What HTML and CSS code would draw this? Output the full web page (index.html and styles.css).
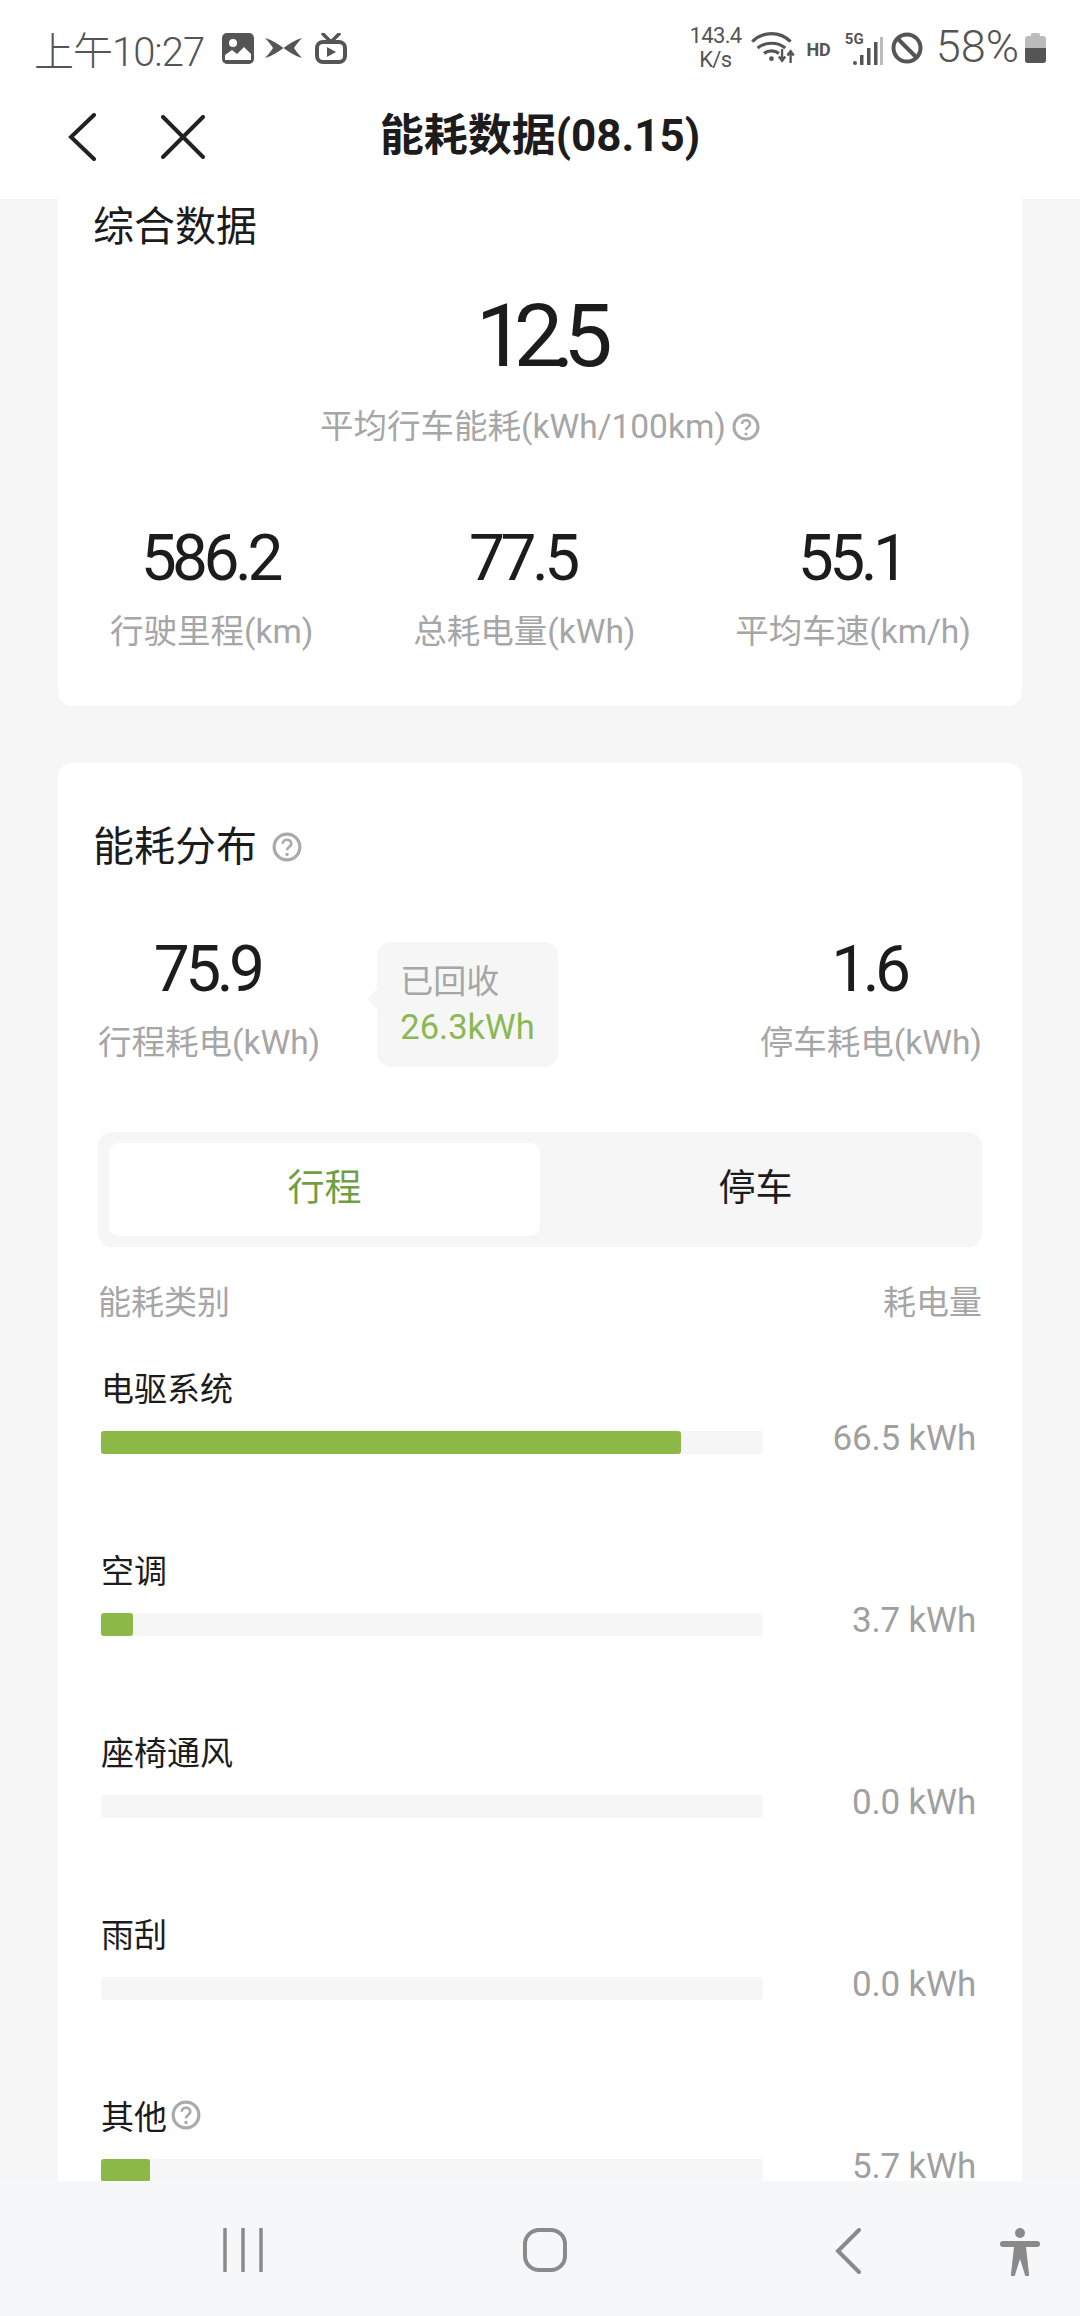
FILE: index.html
```html
<!DOCTYPE html>
<html lang="zh-CN">

<head>
    <meta charset="UTF-8">
    <title>能耗数据</title>
    <link rel="stylesheet" href="styles.css">
</head>

<body>
    <div class="statusbar">
        <div class="status-left">
            <span class="clock">上午10:27</span>
            <svg class="ic-photo" width="32" height="31" viewBox="0 0 32 31">
                <rect width="32" height="31" rx="5" fill="#555"/>
                <circle cx="11" cy="10" r="4" fill="#fff"/>
                <path d="M3 27v-5l7-5 5 4 7-7 7 7v6z" fill="#fff"/>
            </svg>
            <svg class="ic-logo" width="37" height="22" viewBox="0 0 37 22">
                <path d="M0 1c7 2 13 6 18.500 10C24 7 30 3 37 1c-3 3-6 7-8 10 2 3 5 7 8 10-7-2-13-6-18.500-10C13 15 7 19 0 21c3-3 6-7 8-10-2-3-5-7-8-10z" fill="#555"/>
            </svg>
            <svg class="ic-tv" width="32" height="31" viewBox="0 0 32 31">
                <path d="M8 1l7 7M24 1l-7 7" stroke="#555" stroke-width="3.500" stroke-linecap="round"/>
                <rect x="2" y="9" width="28" height="20" rx="6" fill="none" stroke="#555" stroke-width="4"/>
                <path d="M12 14l9 5-9 5z" fill="#555"/>
            </svg>
        </div>
        <div class="status-right">
            <div class="netspeed">143.4<br>K/s</div>
            <svg class="ic-wifi" width="45" height="33" viewBox="0 0 42 31">
                <path d="M2 10c10-10 26-10 36 0M7 16c7-6 19-6 26 0M13 21c4-3 10-3 14 0" fill="none" stroke="#555" stroke-width="3"/>
                <circle cx="20" cy="26" r="2.200" fill="#555"/>
                <path d="M30 17v11M27 24l3 4 3-4M38 30V19M35 23l3-4 3 4" fill="none" stroke="#555" stroke-width="2.200"/>
            </svg>
            <span class="hd">HD</span>
            <div class="signal">
                <span class="five-g">5G</span>
                <svg width="30" height="28" viewBox="0 0 30 28">
                    <circle cx="2" cy="26" r="2" fill="#555"/>
                    <rect x="7" y="18" width="3.500" height="10" fill="#555"/>
                    <rect x="14" y="11" width="3.500" height="17" fill="#555"/>
                    <rect x="21" y="5" width="3.500" height="23" fill="#555"/>
                    <rect x="27" y="0" width="3" height="28" fill="#bbb"/>
                </svg>
            </div>
            <svg class="ic-block" width="32" height="32" viewBox="0 0 32 32">
                <circle cx="16" cy="16" r="13.500" fill="none" stroke="#555" stroke-width="4"/>
                <path d="M6.500 6.500l19 19" stroke="#555" stroke-width="4"/>
            </svg>
            <span class="battery-text">58%</span>
            <div class="battery">
                <div class="battery-cap"></div>
                <div class="battery-body"><div class="battery-level"></div></div>
            </div>
        </div>
    </div>

    <div class="topnav">
        <svg class="nav-back" width="30" height="48" viewBox="0 0 30 48">
            <path d="M27 2L4 24l23 22" fill="none" stroke="#222" stroke-width="4" stroke-linecap="round"/>
        </svg>
        <svg class="nav-close" width="44" height="44" viewBox="0 0 44 44">
            <path d="M2 2l40 40M42 2L2 42" fill="none" stroke="#222" stroke-width="4" stroke-linecap="round"/>
        </svg>
        <h1 class="nav-title">能耗数据(08.15)</h1>
    </div>

    <div class="content">
        <div class="card card-summary">
            <div class="card-title">综合数据</div>
            <div class="big-num">12.5</div>
            <div class="caption"><span>平均行车能耗(kWh/100km)</span>
                <svg class="help" width="28" height="28" viewBox="0 0 28 28">
                    <circle cx="14" cy="14" r="12" fill="none" stroke="#aaa" stroke-width="3"/>
                    <path d="M10 11c0-5 8-5 8 0 0 3-4 3-4 6" fill="none" stroke="#aaa" stroke-width="2.500"/>
                    <circle cx="14" cy="21" r="1.600" fill="#aaa"/>
                </svg>
            </div>
            <div class="stats">
                <div class="stat"><div class="num">586.2</div><div class="label">行驶里程(km)</div></div>
                <div class="stat"><div class="num">77.5</div><div class="label">总耗电量(kWh)</div></div>
                <div class="stat"><div class="num">55.1</div><div class="label">平均车速(km/h)</div></div>
            </div>
        </div>

        <div class="card card-dist">
            <div class="card-title title-help"><span>能耗分布</span>
                <svg class="help" width="30" height="30" viewBox="0 0 28 28">
                    <circle cx="14" cy="14" r="12" fill="none" stroke="#aaa" stroke-width="3"/>
                    <path d="M10 11c0-5 8-5 8 0 0 3-4 3-4 6" fill="none" stroke="#aaa" stroke-width="2.500"/>
                    <circle cx="14" cy="21" r="1.600" fill="#aaa"/>
                </svg>
            </div>
            <div class="dist-row">
                <div class="stat"><div class="num">75.9</div><div class="label">行程耗电(kWh)</div></div>
                <div class="recover">
                    <div class="recover-label">已回收</div>
                    <div class="recover-value">26.3kWh</div>
                </div>
                <div class="stat stat-right"><div class="num">1.6</div><div class="label">停车耗电(kWh)</div></div>
            </div>

            <div class="tabs">
                <div class="tab active">行程</div>
                <div class="tab">停车</div>
            </div>

            <div class="list-head"><span>能耗类别</span><span>耗电量</span></div>

            <div class="item">
                <div class="item-name">电驱系统</div>
                <div class="item-line">
                    <div class="track"><div class="fill" style="width: 87.6%"></div></div>
                    <div class="item-value">66.5 kWh</div>
                </div>
            </div>
            <div class="item">
                <div class="item-name">空调</div>
                <div class="item-line">
                    <div class="track"><div class="fill" style="width: 4.9%"></div></div>
                    <div class="item-value">3.7 kWh</div>
                </div>
            </div>
            <div class="item">
                <div class="item-name">座椅通风</div>
                <div class="item-line">
                    <div class="track"></div>
                    <div class="item-value">0.0 kWh</div>
                </div>
            </div>
            <div class="item">
                <div class="item-name">雨刮</div>
                <div class="item-line">
                    <div class="track"></div>
                    <div class="item-value">0.0 kWh</div>
                </div>
            </div>
            <div class="item">
                <div class="item-name name-help"><span>其他</span>
                    <svg class="help" width="30" height="30" viewBox="0 0 28 28">
                        <circle cx="14" cy="14" r="12" fill="none" stroke="#aaa" stroke-width="3"/>
                        <path d="M10 11c0-5 8-5 8 0 0 3-4 3-4 6" fill="none" stroke="#aaa" stroke-width="2.500"/>
                        <circle cx="14" cy="21" r="1.600" fill="#aaa"/>
                    </svg>
                </div>
                <div class="item-line">
                    <div class="track"><div class="fill" style="width: 7.4%"></div></div>
                    <div class="item-value">5.7 kWh</div>
                </div>
            </div>
        </div>
    </div>

    <div class="sysnav">
        <svg class="sys-lines" width="40" height="44" viewBox="0 0 40 44">
            <path d="M2 1v42M20 1v42M38 1v42" stroke="#8a8a8a" stroke-width="3.500" stroke-linecap="round"/>
        </svg>
        <svg class="sys-home" width="44" height="44" viewBox="0 0 44 44">
            <rect x="2" y="2" width="40" height="40" rx="14" fill="none" stroke="#8a8a8a" stroke-width="4"/>
        </svg>
        <svg class="sys-back" width="26" height="46" viewBox="0 0 26 46">
            <path d="M24 2L3 23l21 21" fill="none" stroke="#8a8a8a" stroke-width="4" stroke-linecap="round"/>
        </svg>
        <svg class="sys-person" width="40" height="48" viewBox="0 0 40 48">
            <circle cx="20" cy="5" r="5" fill="#8a8a8a"/>
            <path d="M3 13h34a2.500 2.500 0 0 1 0 6H26l3 27a2 2 0 0 1-4 1l-5-16-5 16a2 2 0 0 1-4-1l3-27H3a2.500 2.500 0 0 1 0-6z" fill="#8a8a8a"/>
        </svg>
    </div>
</body>

</html>
```
FILE: styles.css
```css
body {
    margin: 0;
    width: 1080px;
    height: 2316px;
    display: flex;
    flex-direction: column;
    overflow: hidden;
    background-color: #f6f6f6;
    font-family: "Roboto", "Noto Sans CJK SC", sans-serif;
    color: #1c1c1c;
}

/* status bar */
.statusbar {
    height: 68px;
    flex: none;
    background-color: #fff;
    display: flex;
    justify-content: space-between;
    color: #555;
}

.status-left {
    display: flex;
    align-items: flex-start;
    padding-left: 34px;
}

.clock {
    font-size: 40px;
    line-height: 44px;
    margin-top: 31px;
    letter-spacing: -1px;
    font-weight: 300;
}

.ic-photo {
    margin: 33px 0 0 18px;
}

.ic-logo {
    margin: 37px 0 0 11px;
}

.ic-tv {
    margin: 33px 0 0 13px;
}

.status-right {
    display: flex;
    align-items: flex-start;
    padding-right: 34px;
}

.netspeed {
    width: 52px;
    font-size: 22px;
    line-height: 24px;
    margin-top: 24px;
    text-align: center;
    letter-spacing: -0.6px;
}

.ic-wifi {
    margin: 31px 0 0 9px;
}

.hd {
    margin: 40px 0 0 11px;
    font-size: 18px;
    line-height: 20px;
    font-weight: 700;
}

.signal {
    position: relative;
    margin: 37px 0 0 22px;
    width: 30px;
}

.five-g {
    position: absolute;
    left: -8px;
    top: -6px;
    font-size: 15px;
    line-height: 16px;
    font-weight: 700;
}

.ic-block {
    margin: 32px 0 0 8px;
}

.battery-text {
    margin: 24px 0 0 13px;
    font-size: 45px;
    line-height: 46px;
    font-weight: 300;
}

.battery {
    margin: 33px 0 0 6px;
    width: 21px;
}

.battery-cap {
    width: 9px;
    height: 3px;
    margin: auto;
    background-color: #bbb;
    border-radius: 2px 2px 0 0;
}

.battery-body {
    height: 27px;
    background-color: #bbb;
    border-radius: 3px;
    overflow: hidden;
    display: flex;
    align-items: flex-end;
}

.battery-level {
    width: 100%;
    height: 15px;
    background-color: #555;
}

/* title bar */
.topnav {
    height: 131px;
    flex: none;
    background-color: #fff;
    position: relative;
    display: flex;
    align-items: center;
    justify-content: center;
}

.nav-back {
    position: absolute;
    left: 67px;
    top: 45px;
}

.nav-close {
    position: absolute;
    left: 161px;
    top: 47px;
}

.nav-title {
    margin: 5px 0 0;
    font-size: 44px;
    font-weight: 700;
    line-height: 60px;
}

/* scrolling area */
.content {
    flex: 1;
    min-height: 0;
    overflow: hidden;
    padding: 0 58px;
}

.card {
    background-color: #fff;
    border-radius: 14px;
    padding: 0 36px;
}

.card-summary {
    border-radius: 0 0 14px 14px;
    padding-top: 4px;
    padding-bottom: 52px;
}

.card-dist {
    margin-top: 57px;
    padding-top: 60px;
    padding-bottom: 40px;
}

.card-title {
    font-size: 41px;
    line-height: 48px;
    margin-left: -1px;
}

.title-help {
    display: flex;
    align-items: center;
    gap: 15px;
}

.big-num {
    margin-top: 43px;
    padding-right: 3px;
    font-size: 88px;
    line-height: 84px;
    text-align: center;
    letter-spacing: -11.5px;
}

.caption {
    margin-top: 27px;
    display: flex;
    justify-content: center;
    align-items: center;
    gap: 6px;
    font-size: 33.5px;
    line-height: 44px;
    color: #a6a6a6;
}

.stats {
    display: flex;
    justify-content: space-between;
    margin-top: 80px;
    padding: 0 15px 0 16px;
}

.stat {
    text-align: center;
}

.num {
    padding-right: 4px;
    font-size: 64px;
    line-height: 60px;
    letter-spacing: -4.5px;
}

.label {
    margin-top: 21px;
    font-size: 33.5px;
    line-height: 44px;
    color: #a6a6a6;
}

/* distribution */
.dist-row {
    display: flex;
    margin: 69px 4px 0;
    align-items: flex-start;
}

.recover {
    position: relative;
    width: 181px;
    height: 125px;
    margin: 2px 0 0 57px;
    box-sizing: border-box;
    padding: 19px 0 0 23px;
    background-color: #f6f6f6;
    border-radius: 14px;
}

.recover::before {
    content: "";
    position: absolute;
    left: -7px;
    top: 50px;
    width: 14px;
    height: 14px;
    background-color: #f6f6f6;
    transform: rotate(45deg);
}

.recover-label {
    font-size: 33px;
    line-height: 42px;
    color: #a6a6a6;
}

.recover-value {
    margin-top: 3px;
    font-size: 34.5px;
    line-height: 42px;
    color: #8bb854;
}

.stat-right {
    margin-left: auto;
}

.tabs {
    display: flex;
    margin: 65px 4px 0;
    padding: 11px;
    background-color: #f6f6f6;
    border-radius: 14px;
}

.tab {
    flex: 1;
    height: 93px;
    line-height: 91px;
    font-size: 37px;
    text-align: center;
    border-radius: 10px;
}

.tab.active {
    background-color: #fff;
    color: #6f9e45;
}

.list-head {
    display: flex;
    justify-content: space-between;
    margin: 34px 4px 0;
    font-size: 33px;
    line-height: 44px;
    color: #a6a6a6;
}

.item {
    height: 182px;
    margin: 0 10px 0 7px;
}

.list-head + .item {
    margin-top: 43px;
}

.item-name {
    font-size: 33px;
    line-height: 44px;
}

.name-help {
    display: flex;
    align-items: center;
    gap: 4px;
}

.name-help .help {
    margin-top: -6px;
}

.item-line {
    display: flex;
    align-items: flex-start;
    margin-top: 19px;
}

.track {
    width: 662px;
    height: 23px;
    background-color: #f6f6f6;
    border-radius: 3px;
    flex: none;
}

.fill {
    height: 100%;
    background-color: #8bb847;
    border-radius: 3px;
}

.item-value {
    flex: 1;
    margin-top: -14px;
    font-size: 35px;
    line-height: 44px;
    text-align: right;
    letter-spacing: -0.2px;
    color: #a0a0a0;
}

/* system nav */
.sysnav {
    height: 135px;
    flex: none;
    position: relative;
    background-color: #f6f7f9;
}

.sys-lines {
    position: absolute;
    left: 223px;
    top: 47px;
}

.sys-home {
    position: absolute;
    left: 523px;
    top: 47px;
}

.sys-back {
    position: absolute;
    left: 835px;
    top: 47px;
}

.sys-person {
    position: absolute;
    left: 1000px;
    top: 47px;
}
```
